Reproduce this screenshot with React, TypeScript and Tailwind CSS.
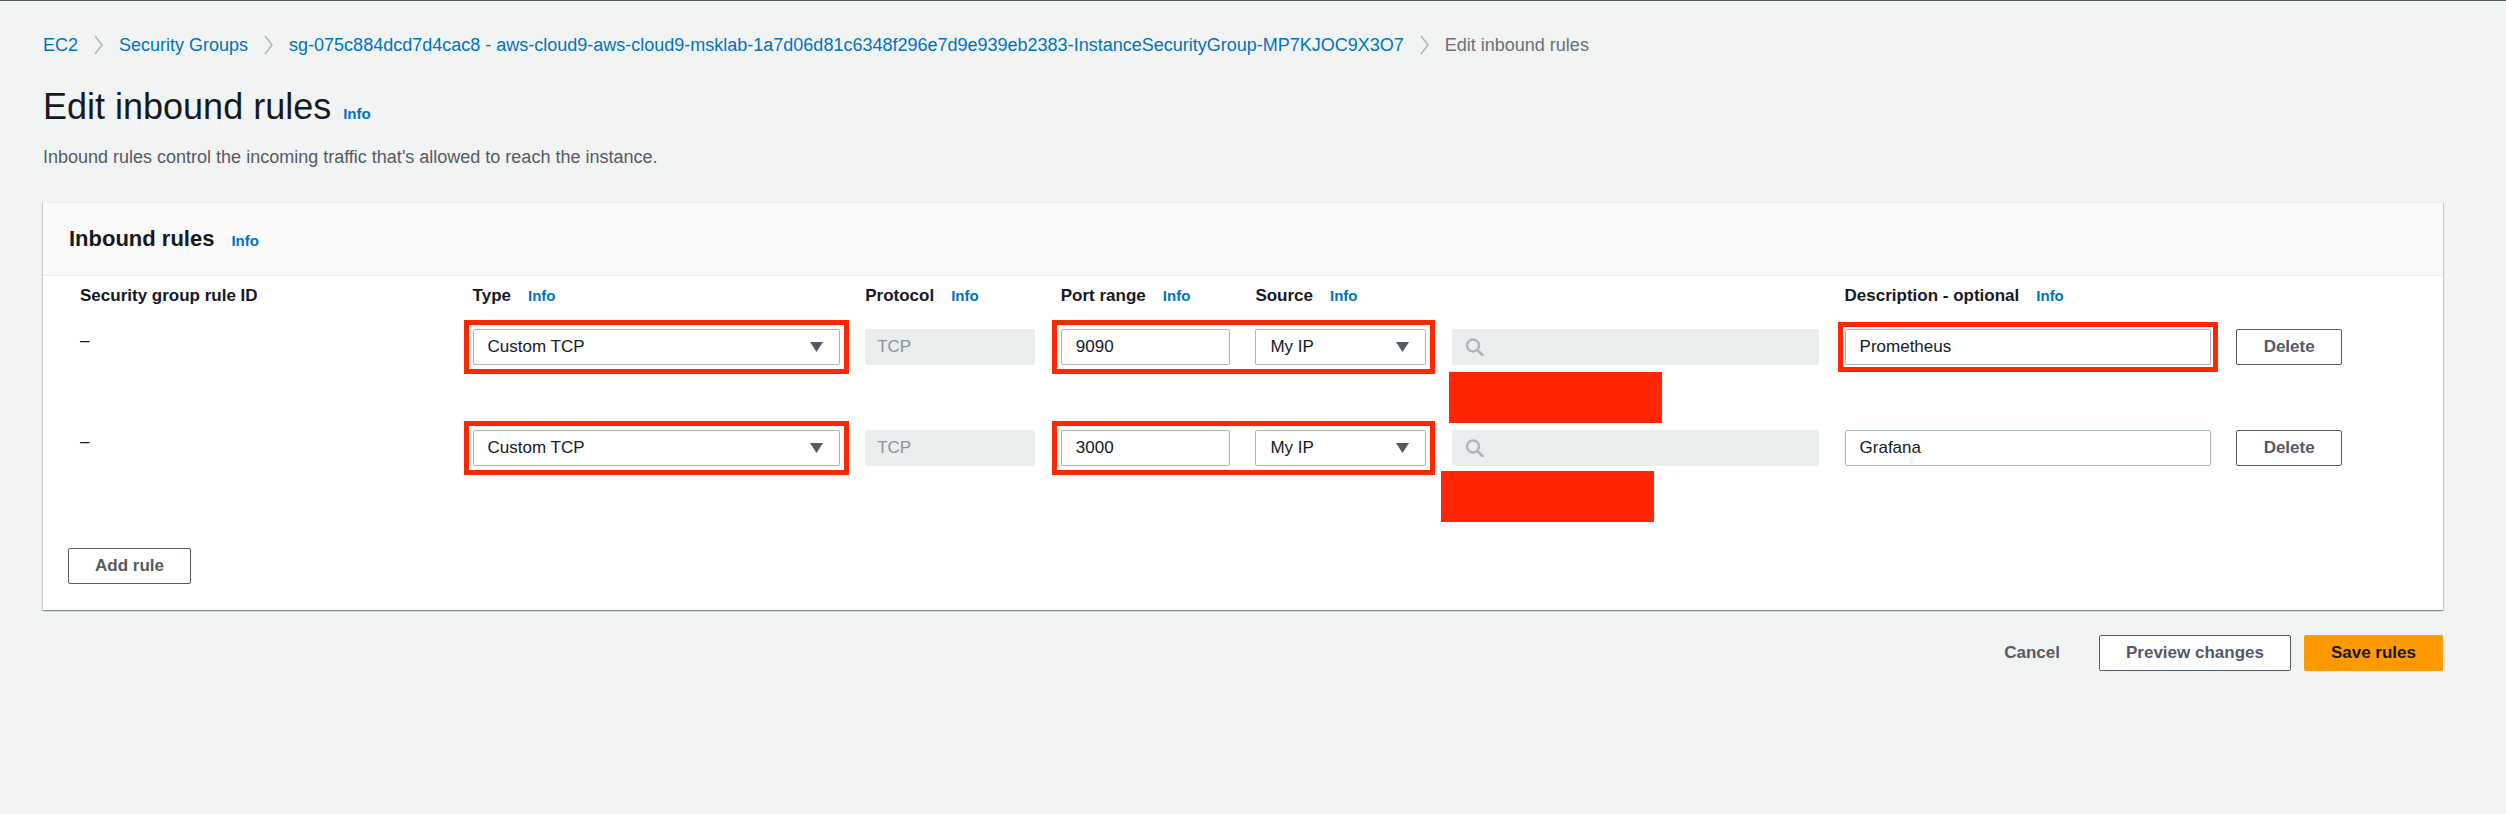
import React from "react";

const cols =
  "grid grid-cols-[367px_367px_170px_169px_171px_367px_366px_106px] gap-x-[25.6px]";

function Info() {
  return <span className="text-[15px] leading-none font-bold text-[#0073bb]">Info</span>;
}

function Chevron() {
  return (
    <svg width="9" height="20" viewBox="0 0 9 20" className="mx-[16px] shrink-0">
      <polyline points="1,1 8,10 1,19" fill="none" stroke="#aab7b8" strokeWidth="1.5" />
    </svg>
  );
}

function Select({ value }: { value: string }) {
  return (
    <div className="h-[36px] bg-white border border-[#aab7b8] rounded-[2px] pl-[14px] pr-[16px] flex items-center justify-between text-[17px] text-[#16191f]">
      <span>{value}</span>
      <svg width="13" height="10" viewBox="0 0 13 10">
        <polygon points="0,0 13,0 6.5,10" fill="#545b64" />
      </svg>
    </div>
  );
}

function Input({ value }: { value: string }) {
  return (
    <div className="h-[36px] bg-white border border-[#aab7b8] rounded-[2px] px-[14px] flex items-center text-[17px] text-[#16191f]">
      {value}
    </div>
  );
}

function Search() {
  return (
    <div className="h-[36px] bg-[#eaeded] rounded-[2px] pl-[13px] flex items-center">
      <svg width="20" height="18" viewBox="0 0 20 18">
        <circle cx="8" cy="7.5" r="6" fill="none" stroke="#aab7b8" strokeWidth="2.4" />
        <line x1="12.3" y1="12" x2="17.5" y2="17" stroke="#aab7b8" strokeWidth="2.6" strokeLinecap="round" />
      </svg>
    </div>
  );
}

function Button({ label, primary, plain }: { label: string; primary?: boolean; plain?: boolean }) {
  if (plain) {
    return (
      <button className="h-[36px] px-[26px] text-[17px] font-bold text-[#545b64]">{label}</button>
    );
  }
  return (
    <button
      className={
        primary
          ? "h-[36px] px-[26px] rounded-[2px] border border-[#ff9900] bg-[#ff9900] text-[17px] font-bold text-[#16191f]"
          : "h-[36px] px-[26px] rounded-[2px] border border-[#545b64] bg-white text-[17px] font-bold text-[#545b64]"
      }
    >
      {label}
    </button>
  );
}

type Rule = { port: string; desc: string; descMarked: boolean; redact: string };

const rules: Rule[] = [
  { port: "9090", desc: "Prometheus", descMarked: true, redact: "left-[-3px] top-[43px]" },
  { port: "3000", desc: "Grafana", descMarked: false, redact: "left-[-11px] top-[41px]" },
];

export default function App() {
  return (
    <div className="min-h-screen bg-[#f2f3f3] border-t border-[#545b64] pl-[43px] pr-[63px] font-['Liberation_Sans',Arial,sans-serif]">
      <nav className="pt-[32px] flex items-center h-[56px] leading-[24px] text-[18px]">
        <span className="text-[#0073bb]">EC2</span>
        <Chevron />
        <span className="text-[#0073bb]">Security Groups</span>
        <Chevron />
        <span className="text-[#0073bb] whitespace-nowrap">
          sg-075c884dcd7d4cac8 - aws-cloud9-aws-cloud9-msklab-1a7d06d81c6348f296e7d9e939eb2383-InstanceSecurityGroup-MP7KJOC9X3O7
        </span>
        <Chevron />
        <span className="text-[#687078]">Edit inbound rules</span>
      </nav>

      <div className="mt-[28px] flex items-baseline gap-[12px] leading-[44px]">
        <h1 className="text-[36px] text-[#16191f]">Edit inbound rules</h1>
        <Info />
      </div>
      <p className="mt-[16px] text-[18px] leading-[24px] text-[#545b64]">
        Inbound rules control the incoming traffic that's allowed to reach the instance.
      </p>

      <section className="mt-[33px] bg-white border-t border-[#eaeded] shadow-[0_1px_1px_0_rgba(0,28,36,0.3),1px_1px_1px_0_rgba(0,28,36,0.15),-1px_1px_1px_0_rgba(0,28,36,0.15)]">
        <div className="h-[73px] bg-[#fafafa] border-b border-[#eaeded] pl-[26px] pt-[22px] flex items-baseline gap-[17px] leading-[28px]">
          <h2 className="text-[22px] font-bold text-[#16191f]">Inbound rules</h2>
          <Info />
        </div>

        <div className="pl-[25px] pt-[8px] pb-[26px]">
          <div className="pl-[12px]">
            <div className={`${cols} text-[17px] font-bold leading-[24px] text-[#16191f]`}>
              <div>Security group rule ID</div>
              <div className="flex items-baseline gap-[17px]">Type <Info /></div>
              <div className="flex items-baseline gap-[17px]">Protocol <Info /></div>
              <div className="flex items-baseline gap-[17px] whitespace-nowrap">Port range <Info /></div>
              <div className="flex items-baseline gap-[17px]">Source <Info /></div>
              <div />
              <div className="flex items-baseline gap-[17px] whitespace-nowrap">Description - optional <Info /></div>
              <div />
            </div>

            <div className="mt-[21px] flex flex-col gap-[65px]">
              {rules.map((r) => (
                <div key={r.port} className={`${cols} items-start`}>
                  <div className="text-[17px] leading-[24px] text-[#16191f]">–</div>
                  <div className="outline-[5px] outline-solid outline-[#ff2600] outline-offset-[4px]">
                    <Select value="Custom TCP" />
                  </div>
                  <div className="h-[36px] bg-[#eaeded] rounded-[2px] px-[12px] flex items-center text-[17px] text-[#879596]">
                    TCP
                  </div>
                  <div className="col-span-2 grid grid-cols-[169px_171px] gap-x-[25.6px] outline-[5px] outline-solid outline-[#ff2600] outline-offset-[4px]">
                    <Input value={r.port} />
                    <Select value="My IP" />
                  </div>
                  <div className="relative">
                    <Search />
                    <div className={`absolute ${r.redact} w-[213px] h-[51px] bg-[#ff2600]`} />
                  </div>
                  <div
                    className={
                      r.descMarked
                        ? "outline-[5px] outline-solid outline-[#ff2600] outline-offset-[2px]"
                        : ""
                    }
                  >
                    <Input value={r.desc} />
                  </div>
                  <Button label="Delete" />
                </div>
              ))}
            </div>
          </div>

          <div className="mt-[82px]">
            <Button label="Add rule" />
          </div>
        </div>
      </section>

      <div className="mt-[25px] flex justify-end items-center gap-[13px]">
        <Button label="Cancel" plain />
        <Button label="Preview changes" />
        <Button label="Save rules" primary />
      </div>
    </div>
  );
}
